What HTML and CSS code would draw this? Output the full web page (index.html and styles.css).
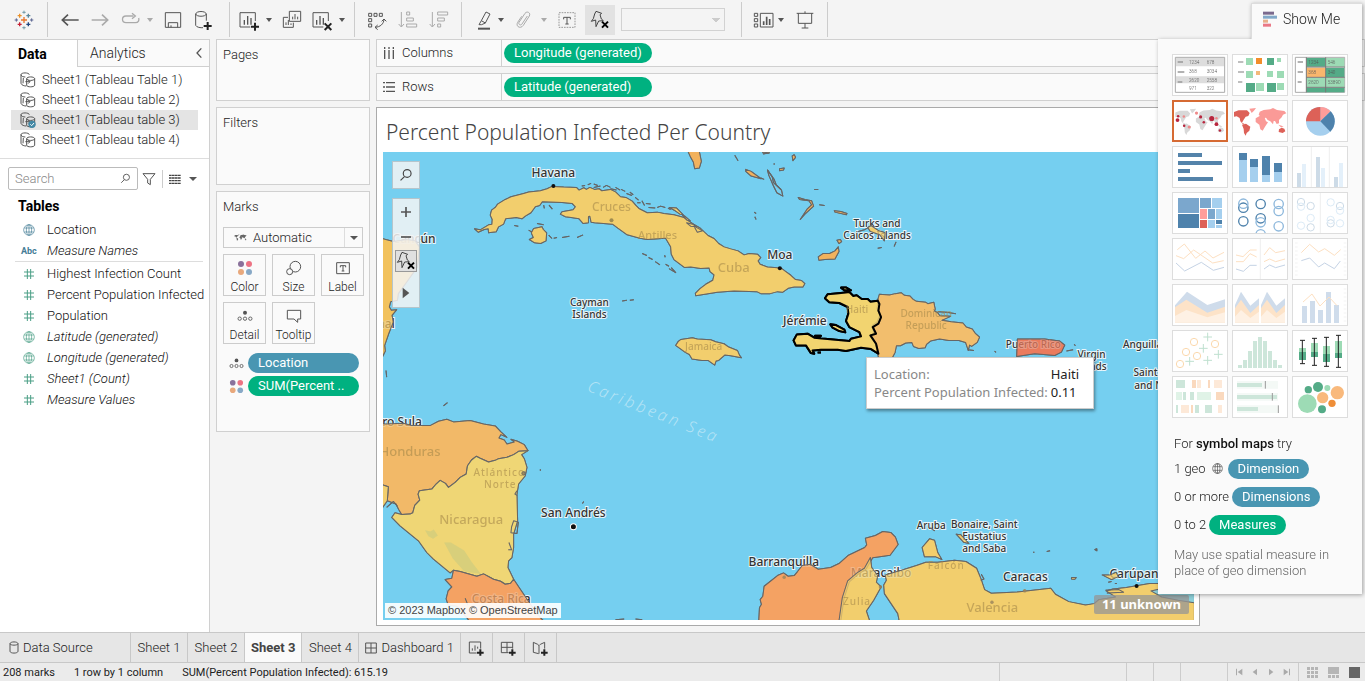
FILE: index.html
```html
<!DOCTYPE html>
<html lang="en">
<head>
<meta charset="utf-8">
<title>Percent Population Infected Per Country</title>
<link rel="stylesheet" href="styles.css">
</head>
<body>
<svg class="defs" aria-hidden="true">
  <defs>
    <symbol id="globe" viewBox="0 0 36 36"><g fill="none" stroke="currentColor" stroke-width="2"><circle cx="18" cy="18" r="16"/><ellipse cx="18" cy="18" rx="8" ry="16"/><path d="M4 12H32M4 24H32M18 3V33"/></g></symbol>
    <symbol id="hash" viewBox="0 0 36 36"><path d="M13 3V33M23 3V33M3 12H33M3 24H33" fill="none" stroke="currentColor" stroke-width="3"/></symbol>
    <symbol id="source" viewBox="0 0 48 48"><g fill="none" stroke="currentColor" stroke-width="3"><path d="M3 8v26c2 6 10 8 16 8M3 8c0-7 24-7 25 0M3 8c1 6 8 7 13 7M10 18l-1 16"/><path d="M20 20v20c1 6 22 6 24 0V20M20 20c1-7 23-7 24 0c-1 7-23 7-24 0M16 29h14M24 23l6 6-6 6"/></g></symbol>
    <symbol id="find" viewBox="0 0 36 36"><g fill="none" stroke="currentColor" stroke-width="3"><circle cx="21" cy="14" r="10"/><path d="M14 22L4 32"/></g></symbol>
    <symbol id="pinx" viewBox="0 0 60 60"><path d="M18 4l17 6-5 4 4 13 6 5-14 1-8 17-1-20-13 4 6-8 4-14z" fill="none" stroke="currentColor" stroke-width="3"/><path d="M36 35l18 18M54 35L36 53" stroke="#000" stroke-width="6"/></symbol>
    <symbol id="detail" viewBox="0 0 48 36"><circle cx="24" cy="8" r="6" fill="#555"/><g fill="none" stroke="#666" stroke-width="3"><circle cx="8" cy="26" r="5"/><circle cx="24" cy="26" r="5"/><circle cx="40" cy="26" r="5"/></g></symbol>
    <symbol id="dots" viewBox="0 0 48 48"><circle cx="12" cy="12" r="9" fill="#8a719b"/><circle cx="36" cy="12" r="9" fill="#ed7384"/><circle cx="12" cy="36" r="9" fill="#e8a87c"/><circle cx="36" cy="36" r="9" fill="#87a8c6"/></symbol>
    <symbol id="world" viewBox="231 318 168 90"><path fill="currentColor" d="M237 336l14-5 25 0 8 8-4 9-8 2-6 9-5 9 8 4-5 1-8-9-2-10-9-5-8 1zM261 374l12-3 13 9-3 12-8 7-3 8-5-8-1-12zM372 388l8-5 8 3 3 8-8 5-12-3z"/><path d="M283 326l20-2-6 8-7 7zM302 355l12-7 14 2 5 14 6 3-9 13-7 12-7-4-3-14-11-8zM311 345l3-10 12-5 20-2 8-4 12 6 22 3 6 7-10 4-4 8-8 8 0 10-7 2-5-9-4 0-2 10-8-9-8-4-5-7-8 2zM370 374l10 3 6 4-8 1z"/></symbol>
    <g id="lands">
          <g class="land" transform="translate(380 100) scale(.33333)">
            <path fill="#f2c25e" d="M6 415L40 424 80 418 105 422 118 440 112 500 80 545 55 580 52 600 32 604 28 620 34 630 50 628 36 645 40 665 26 700 14 735 16 752 8 768z"/>
            <path fill="#f2cd6e" d="M283 386L300 389 325 374 335 372 336 358 330 345 334 330 345 322 352 312 375 298 392 290 430 280 445 276 480 272 500 266 515 259 550 261 588 262 596 270 610 263 618 268 628 262 642 268 656 266 664 272 690 268 706 276 720 290 736 292 755 303 766 316 775 325 800 338 830 336 850 340 880 344 910 352 935 370 960 385 982 406 1000 415 1014 430 1030 440 1050 446 1072 452 1090 464 1105 460 1130 462 1140 472 1132 482 1138 492 1160 500 1200 503 1215 514 1230 525 1244 538 1262 541 1272 550 1266 560 1240 560 1222 564 1205 576 1190 574 1168 580 1140 580 1128 574 1060 572 1010 576 945 586 944 579 958 565 975 552 996 540 1000 524 988 514 985 503 960 505 930 500 912 502 880 478 872 462 870 440 855 414 800 418 778 414 740 404 712 384 696 372 642 368 632 366 628 348 624 350 624 368 608 370 596 356 572 352 555 350 540 342 545 335 578 329 585 320 575 310 545 307 486 305 478 316 465 320 452 338 435 348 425 356 408 352 376 356 370 372 355 380 348 395 325 398 324 386 312 388 294 396z"/>
            <path fill="#f2cd6e" d="M460 385l25-5 4 8 10 10-2 24-16 8-18-2-16-10 12-6-6-14zM885 735l8-12 8-6 34-5 15 4 40 2 15 6 25 6 14 10 26 10 6 14 6 8-32-6-18-2-18 16-8 2-4 12-20-14-18 0-30-4-8-14-12-6z"/>
            <path fill="#f2b25e" d="M922 154h34l6 30-6 20-14 2-4-20-8-14zM1095 208l16 6 30 22-30-8-16-14zM1145 154h20v5h-18z"/>
            <path class="islets" d="M445 390l10 6M470 370l20 4M505 405l10 10M520 414l10-2M545 412l22-4M590 412l18-8M402 376l12 2M785 460l14 6M804 472l12 6M824 484l14 10M852 465l2 6M855 492l10 6M865 505l20 12M725 602l14-2M748 600l12-2M490 315l2 10M506 315l10 12M604 258l10-2M622 254l10-4M640 252l12 4M640 262l20-4M668 262l10-6 12 6M690 266l18 4M705 262l14 8M722 268l12 6M738 280l16 6M748 276l10 8M764 292l10 8M770 308l10 0M784 302l8 14M796 310l14 2M804 322l20 2M830 322l10-4 14 4M862 324l8 4M872 502l14 16M1062 166l10 16M1160 210l20 28 6 16 14 14M1120 336l6 4M1122 350l4 8"/>
            <path fill="#f2cd6e" d="M866 322l22 2 20 20-10-2-14-10zM905 344l10 6 14 12-10-2zM918 368l18 4 12 8-18-2zM940 378l26 14-16 4z"/>
          </g>
          <g class="land" transform="translate(760 140) scale(.33333)">
            <path fill="#f2be6e" d="M350 478l5-16 30 2 18-4 17-3 10 8 16 2 10 10 10 6 28 3 6 4 18-4 4 20-2 6 10 6 6 8 32 2-26 12 28 4 35 4 10 12 18 6 10 14 12 10-7 16-17 12-6-4-4 16-8-24-20-6-30 0-28-4-27 6-12 10-4 10-19 2-16-6-5-12-18 2-16 8-12 0-4 20-8 15h-42l-6-40-18-25 10-6-4-25 14-10 8-20-8-20 4-30z"/>
            <path fill="#ea7b5d" d="M768 596l82 0 45 6 15 12-10 21-20 10-60-5-54 8z"/>
            <path fill="#f2b25e" d="M172 350l14-10 20 0 16-8 10-12 2 14-12 22-30 2-18 2zM228 300l10-2 4 6-8 6zM220 212l20 2 18 6-2 4-34-8zM112 172l20 6 20 4 6 16-26 24-14 16 20-30 14-14-8-12-28-4zM94 48l6-4 4 8-8 10zM56 86l14-2-2 6-12 2z"/>
            <path class="islets" d="M20 90l14 20 4 18 24 22 4 18-18-10-10-20-14-32zM5 35l18 4-16 3M40 70v4M160 148h12M175 194l16 2M350 324l12-2M405 305l-6 14M915 632l20-4M938 612l4 4M700 632l4 4M620 628l18 2M530 514l26 2 28 4M290 275l20-6 20-12M10 118l-10-4"/>
            <path fill="#f2cd6e" d="M320 262l10-6 20 14 22 8-2 24-14-18-28-10z"/>
            <path class="haiti" fill="#f2d470" d="M192 474l8-12 40-4 25-3 12 12 10-2 15 11 18 0 8 8 22-3 5 10-3 20 8 19-8 20-17 10 10 20-17 5 17 25 7 30-22-14-30-4-45 10-25-4-50 0-25 2 5 10-10-2-15-23-30 0-7-15 10-18 32-2 20 12 40 4 65 6 5-7 30-7-5-13-30-15-10-18 7-22-2-20-25-12-30-2zM208 552l17 2 25 14 3 8-18-4-20-10zM240 442l16 0 14 8-20 0zM162 586h18l-6 6zM170 636h10"/>
          </g>
          <g class="land" transform="translate(380 360) scale(.33333)">
            <path fill="#f2b968" d="M6 188L16 190 70 188 95 195 150 195 175 182 200 176 220 184 270 180 310 190 345 196 362 214 380 230 362 222 356 232 372 238 380 250 402 244 392 236 412 242 432 252 443 270 415 272 400 282 380 290 355 294 345 299 325 304 300 293 288 287 274 298 262 315 258 340 240 350 225 365 205 380 196 368 180 359 168 370 155 385 118 390 114 400 119 418 104 434 98 456 90 460 65 461 56 446 48 430 22 420 25 378 6 372z"/>
            <path fill="#f2cd6e" d="M6 372L25 378 22 420 8 440 6 440z"/>
            <path fill="#efd576" d="M443 270L424 282 432 294 440 320 435 345 415 370 410 400 412 480 400 520 400 560 395 590 385 600 383 620 400 655 391 667 375 670 361 661 340 655 310 639 290 646 240 632 220 628 210 636 160 595 140 575 115 540 60 495 35 470 45 456 65 461 90 460 98 456 104 434 119 418 114 400 118 390 155 385 168 370 180 359 196 368 205 380 225 365 240 350 258 340 262 315 274 298 288 287 300 293 325 304 345 299 355 294 380 290 400 282 415 272z"/>
            <path fill="#f4a263" d="M220 628L240 632 290 646 310 639 340 655 361 661 375 670 391 667 400 655 420 685 454 735 480 770 494 784 270 784 260 770 230 736 204 732 198 714 204 690 215 678 195 656 215 652z"/>
            <path class="lake" d="M192 545l20 0 40 24 22 34 28 36-50-8-34-38zM135 508l16 4 10-6 12 18-14 10-14-8z"/>
            <path class="islets" d="M18 30l2 20M190 136l12-10M480 326v4M606 428l4-6M400 480l14 4-4 34-18-2 2-18zM386 545l8 22-10 0M410 390l-6 10 6 4M705 776l26-2M765 774l20 2M20 440l20-18 12 14M255 712l8 20"/>
            <circle cx="430" cy="338" r="5" fill="#8f7d5a"/>
          </g>
          <g class="land" transform="translate(760 400) scale(.33333)">
            <path fill="#f4a263" d="M-6 660l2-40 6-10-4-14 8-10 4-30 40-32 18-8 14 10 18-2 10-12 14-18 24-4 24 15 37-5 25-12 27-24 50-24 6-8-4-20 30-8 22-12 24 3 14 14 8 22-24 32-52 8-20 34-22 14-28 24-16 50-10 70z"/>
            <path fill="#f2cd6e" d="M328 470l4 30 18 24-4 20 14 14-22 40-22 32 10 30h-92l10-70 16-50 28-24 22-14zM372 522l56-16 38-12 28-10 36 0 50-6 34 4 32 20 14 34 10 30 20 11 78-4 100-11 14 18 40 22 50 10 26-4 14-12 50-8-28-18 20-6 40-4 70-12 60 0 74 20v100H416l-6-30-40-60-2-26 8-14zM483 440l22-26 15 4 10 38 12 20-18-8-34 0zM1022 522l24 0 18-8 6 14-20 8zM930 530l14 0-4 5-10-1zM585 400l14 2 24 26-16-4z"/>
            <path fill="#75cff0" d="M1168 570l36-8 30 10 66-6v40l-50-8-50-10z"/>
            <path class="islets" d="M815 454h4M856 452l10-2M1000 446l6-2v6zM1040 544l10-2M1060 548h6M1032 568l40-2 14 8-50 2M505 380l16 10M660 520l8 14-10 4"/>
            <g fill="#9a845c" stroke="none"><circle cx="70" cy="529" r="5"/><circle cx="790" cy="570" r="5"/><circle cx="692" cy="604" r="5"/><circle cx="358" cy="558" r="5"/></g>
          </g>
    </g>
  </defs>
</svg>

<header class="toolbar">
  <div class="logo"><svg viewBox="0 0 60 60" width="20" height="20" fill="none" stroke-width="4"><path stroke="#e8762d" d="M30 21v18M21 30h18"/><path stroke="#eb9129" d="M17 11v12M11 17h12"/><path stroke="#59879b" d="M43 11v12M37 17h12"/><path stroke="#c72035" d="M17 37v12M11 43h12"/><path stroke="#1f457e" d="M43 37v12M37 43h12"/><path stroke="#7199a6" stroke-width="3" d="M30 2v9M25 7h10M30 49v9M25 53h10"/><path stroke="#5b6591" stroke-width="3" d="M7 25v10M2 30h10M53 25v10M48 30h10"/></svg></div>
  <div class="group first">
    <button class="tool" aria-label="Back"><svg viewBox="0 0 72 72"><path stroke-width="5" d="M62 36H14M30 20L13 36l17 16"/></svg></button>
    <button class="tool dim" aria-label="Forward"><svg viewBox="0 0 72 72"><path stroke-width="5" d="M11 36H59M42 20l17 16-17 16"/></svg></button>
    <div class="split dim"><button class="tool dim" aria-label="Replay"><svg viewBox="0 0 72 72"><path stroke-width="4" d="M46 24h-22c-14 0-14 20 0 20h28c10 0 12-8 10-14M42 16l10 8-10 8"/></svg></button><button class="caret" aria-label="Replay options"></button></div>
    <button class="tool" aria-label="Save"><svg viewBox="0 0 72 72"><path d="M13 14h46v44H13zM22 58V44h28v14M30 58v-6"/></svg></button>
    <button class="tool" aria-label="New data source"><svg viewBox="0 0 72 72"><path d="M14 18v34c2 6 16 8 22 7M14 18c2-10 30-10 32 0c-2 9-30 9-32 0M46 18v20"/><path class="plus" d="M50 42v24M38 54h24"/></svg></button>
  </div>
  <div class="group tight">
    <div class="split"><button class="tool" aria-label="New worksheet"><svg viewBox="0 0 72 72"><path d="M40 57H9V14h46v25"/><path stroke-width="4" d="M22 50V36M32 50V24M42 50V30"/><path class="plus" d="M54 44v24M42 56h24"/></svg></button><button class="caret" aria-label="Worksheet options"></button></div>
    <button class="tool" aria-label="Duplicate"><svg viewBox="0 0 72 72"><path d="M28 10h34v30H28zM24 28H10v30h30V44M38 34v-8M45 34V18M53 34v-8M18 51v-8M25 51V36M33 51v-5"/></svg></button>
    <div class="split"><button class="tool" aria-label="Clear sheet"><svg viewBox="0 0 72 72"><path d="M40 57H9V14h46v25"/><path stroke-width="4" d="M20 50V36M30 50V24M40 50V30"/><path class="plus" d="M44 46l20 20M64 46L44 66"/></svg></button><button class="caret" aria-label="Clear options"></button></div>
  </div>
  <div class="group">
    <button class="tool" aria-label="Swap rows and columns"><svg viewBox="0 0 72 72"><path d="M11 16h9v9h-9zM27 16h9v9h-9zM43 16h9v9h-9zM11 32h9v9h-9zM11 48h9v9h-9zM30 58c16-1 26-10 27-24M38 51l-8 7 8 7M50 40l7-7 7 7"/></svg></button>
    <button class="tool dim" aria-label="Sort ascending"><svg viewBox="0 0 72 72"><path d="M16 12v44M8 48l8 9 8-9M32 12h9v9h-9zM32 30h20v9H32zM32 48h30v9H32z"/></svg></button>
    <button class="tool dim" aria-label="Sort descending"><svg viewBox="0 0 72 72"><path d="M16 12v44M8 48l8 9 8-9M32 12h30v9H32zM32 30h20v9H32zM32 48h9v9h-9z"/></svg></button>
  </div>
  <div class="group close">
    <div class="split snug"><button class="tool" aria-label="Highlight"><svg viewBox="0 0 72 72"><path d="M28 38L42 12l12 6-14 27-11 5-8 0zM28 38l12 7"/><path stroke-width="6" d="M18 62h36"/></svg></button><button class="caret" aria-label="Highlight options"></button></div>
    <div class="split dim"><button class="tool dim" aria-label="Group"><svg viewBox="0 0 72 72"><path d="M46 24L30 48c-4 6-12 1-9-5l18-27c6-8 18-2 13 8L34 52c-8 12-24 4-17-9l12-18"/></svg></button><button class="caret" aria-label="Group options"></button></div>
    <button class="tool" aria-label="Show mark labels"><svg viewBox="0 0 72 72"><path stroke-dasharray="5 3" stroke="#999" d="M12 14h48v44H12z"/><path d="M26 34v-6h20v6M36 28v20M31 48h10"/></svg></button>
    <button class="tool active" aria-label="Fix axes"><svg viewBox="0 0 60 60"><use href="#pinx"/></svg></button>
    <select class="fit" aria-label="Fit"><option></option></select>
  </div>
  <div class="group">
    <div class="split snug"><button class="tool" aria-label="Show cards"><svg viewBox="0 0 72 72"><path d="M7 16h10v9H7zM7 32h10v9H7zM7 48h10v9H7zM25 16h38v41H25z"/><path stroke-width="5" d="M35 51V40M44 51V26M53 51V33"/></svg></button><button class="caret" aria-label="Card options"></button></div>
    <button class="tool" aria-label="Presentation mode"><svg viewBox="0 0 72 72"><path d="M11 16h50M16 16v30h40V16M36 46v14M26 60h20M36 16v-6"/></svg></button>
  </div>
</header>

<main class="workspace">
  <aside class="data-pane">
    <div class="pane-tabs">
      <button class="pane-tab current">Data</button>
      <button class="pane-tab other"><span>Analytics</span><svg viewBox="0 0 24 36" width="8" height="12"><path d="M19 4L6 18l13 14" fill="none" stroke="#555" stroke-width="4"/></svg></button>
    </div>
    <ul class="sources">
      <li><svg><use href="#source"/></svg>Sheet1 (Tableau Table 1)</li>
      <li><svg><use href="#source"/></svg>Sheet1 (Tableau table 2)</li>
      <li class="selected"><svg viewBox="0 0 48 48"><use href="#source"/><circle cx="36" cy="37" r="11" fill="#4389a6"/><path d="M31 37l4 4 7-8" fill="none" stroke="#fff" stroke-width="3"/></svg>Sheet1 (Tableau table 3)</li>
      <li><svg><use href="#source"/></svg>Sheet1 (Tableau table 4)</li>
    </ul>
    <div class="search-row">
      <label class="search"><input type="text" placeholder="Search" aria-label="Search"><svg><use href="#find"/></svg></label>
      <button class="mini" aria-label="Filter fields"><svg viewBox="0 0 42 42" width="14" height="14"><path d="M3 5h36L25 22v16l-8-5V22z" fill="none" stroke="#555" stroke-width="3"/></svg></button>
      <button class="mini list" aria-label="View options"><svg viewBox="0 0 36 30" width="12" height="10"><path d="M0 4h36M0 12h36M0 20h36M0 28h36" stroke="#444" stroke-width="4" stroke-dasharray="8 1"/></svg><span class="tri"></span></button>
    </div>
    <h2>Tables</h2>
    <ul class="fields">
      <li class="dim-f"><svg><use href="#globe"/></svg>Location</li>
      <li class="dim-f"><b class="abc">Abc</b><i>Measure Names</i></li>
    </ul>
    <ul class="fields measures">
      <li><svg><use href="#hash"/></svg>Highest Infection Count</li>
      <li><svg><use href="#hash"/></svg>Percent Population Infected</li>
      <li><svg><use href="#hash"/></svg>Population</li>
      <li><svg><use href="#globe"/></svg><i>Latitude (generated)</i></li>
      <li><svg><use href="#globe"/></svg><i>Longitude (generated)</i></li>
      <li><svg><use href="#hash"/></svg><i>Sheet1 (Count)</i></li>
      <li><svg><use href="#hash"/></svg><i>Measure Values</i></li>
    </ul>
  </aside>

  <section class="cards">
    <div class="card pages">Pages</div>
    <div class="card filters">Filters</div>
    <div class="card marks">
      <div>Marks</div>
      <div class="mark-type"><svg width="13" height="9"><use href="#world"/></svg><select aria-label="Mark type"><option>Automatic</option></select><span class="drop"></span></div>
      <div class="mark-grid">
        <button><svg width="16" height="16"><use href="#dots"/></svg>Color</button>
        <button><svg viewBox="0 0 48 48" width="16" height="16" fill="none" stroke="#555" stroke-width="3"><circle cx="28" cy="20" r="16"/><circle cx="11" cy="35" r="9" fill="#fafafa"/></svg>Size</button>
        <button><svg viewBox="0 0 48 48" width="16" height="16" fill="none" stroke="#555" stroke-width="3"><path d="M5 8h38v33H5zM16 22v-5h16v5M24 17v16M20 33h8"/></svg>Label</button>
        <button><svg viewBox="0 0 48 36" width="16" height="16"><use href="#detail"/></svg>Detail</button>
        <button><svg viewBox="0 0 48 48" width="16" height="16" fill="none" stroke="#555" stroke-width="3"><path d="M4 7h40v26H35v10l-11-10H4z"/></svg>Tooltip</button>
      </div>
      <div class="encoding"><svg viewBox="0 0 48 36"><use href="#detail"/></svg><span class="pill blue">Location</span></div>
      <div class="encoding"><svg><use href="#dots"/></svg><span class="pill green">SUM(Percent ..</span></div>
    </div>
  </section>

  <section class="sheet">
    <div class="shelf"><div class="shelf-name"><svg viewBox="0 0 36 36" width="12" height="12"><path d="M5 0v6M18 0v6M31 0v6M5 9v27M18 9v27M31 9v27" stroke="#555" stroke-width="4"/></svg>Columns</div><span class="pill green">Longitude (generated)</span></div>
    <div class="shelf"><div class="shelf-name"><svg viewBox="0 0 36 36" width="12" height="12"><path d="M0 5h6M0 18h6M0 31h6M9 5h27M9 18h27M9 31h27" stroke="#555" stroke-width="4"/></svg>Rows</div><span class="pill green">Latitude (generated)</span></div>
    <div class="view">
      <h1>Percent Population Infected Per Country</h1>
      <div class="map">
        <svg class="geo" viewBox="383 152 810 467" preserveAspectRatio="xMinYMin slice" role="img" aria-label="Map of the Caribbean">
          <use href="#lands" class="base"/>
          <g class="city">
            <text x="553" y="177">Havana</text><text x="779" y="259">Moa</text><text x="414" y="243">Cancún</text><text x="804" y="325">Jérémie</text>
            <text x="386" y="328">nal</text><text x="402" y="425">ro Sula</text><text x="573" y="516">San Andrés</text><text x="783" y="565">Barranquilla</text>
            <text x="880" y="576">Maracaibo</text><text x="1024" y="580">Caracas</text><text x="1136" y="577">Carúpano</text><text x="501" y="602">Costa Rica</text>
          </g>
          <g class="isle">
            <text x="589" y="306">Cayman</text><text x="589" y="318">Islands</text><text x="876" y="227">Turks and</text><text x="876" y="239">Caicos Islands</text>
            <text x="1032" y="348">Puerto Rico</text><text x="1090" y="358">Virgin</text><text x="1088" y="370">Islands</text><text x="1141" y="348">Anguilla</text><text x="1144" y="376">Saint</text><text x="1147" y="388">and N</text>
            <text x="930" y="528">Aruba</text><text x="983" y="527">Bonaire, Saint</text><text x="983" y="539">Eustatius</text><text x="983" y="551">and Saba</text>
          </g>
          <use href="#lands" class="tint"/>
          <g class="faded">
            <text x="611" y="211" font-size="12">Cruces</text><text x="657" y="239" font-size="11">Antilles</text><text x="733" y="272" font-size="13">Cuba</text><text x="703" y="350" font-size="10">Jamaica</text>
            <text x="856" y="313" font-size="10">Haiti</text><text x="925" y="317" font-size="10">Dominican</text><text x="925" y="329" font-size="10">Republic</text><text x="410" y="455" font-size="13">Honduras</text>
            <text x="471" y="523" font-size="13">Nicaragua</text><text x="499" y="475" font-size="10" class="wide">Atlántico</text><text x="500" y="487" font-size="10" class="wide">Norte</text>
            <text x="991" y="611" font-size="13">Valencia</text><text x="945" y="568" font-size="10" class="wide">Falcón</text><text x="856" y="604" font-size="10" class="wide">Zulia</text>
          </g>
          <text class="sea" transform="translate(586 390) rotate(22)">Caribbean Sea</text>
          <g fill="#111"><circle cx="553" cy="186" r="2"/><circle cx="779" cy="268" r="2"/><circle cx="573" cy="526" r="3" stroke="#fff"/><circle cx="1135" cy="585" r="2"/><circle cx="611" cy="220" r="2" fill="#a08c50"/></g>
        </svg>
        <button class="map-search" aria-label="Search map"><svg width="14" height="14"><use href="#find"/></svg></button>
        <div class="map-tools">
          <button aria-label="Zoom in"><svg viewBox="0 0 36 36" width="12" height="12"><path d="M18 3v30M3 18h30" stroke="#555" stroke-width="5"/></svg></button>
          <button aria-label="Zoom out"><svg viewBox="0 0 36 36" width="12" height="12"><path d="M3 18h30" stroke="#555" stroke-width="5"/></svg></button>
          <button class="pinned" aria-label="Reset map"><svg width="20" height="20"><use href="#pinx"/></svg></button>
          <button aria-label="More tools"><svg viewBox="0 0 24 36" width="8" height="12"><path d="M2 2l20 16L2 34z" fill="#555"/></svg></button>
        </div>
        <div class="credit">© 2023 Mapbox © OpenStreetMap</div>
        <button class="unknown">11 unknown</button>
        <dl class="tip"><dt>Location:</dt><dd>Haiti</dd><dt>Percent Population Infected:</dt><dd>0.11</dd></dl>
      </div>
    </div>
  </section>
</main>

<aside class="showme">
  <h2 class="showme-tab"><svg viewBox="0 0 45 48" width="15" height="16"><path fill="#7b6a8e" d="M0 2h33v9H0z"/><path fill="#82a9c9" d="M0 14h42v9H0z"/><path fill="#e8b08a" d="M0 26h15v9H0z"/><path fill="#ea7886" d="M0 38h24v9H0z"/></svg>Show Me</h2>
  <div class="showme-body">
    <div class="thumbs">
      <button aria-label="Text table"><svg viewBox="54 165 162 120"><path d="M61 172h148v105H61z" fill="#fff" stroke="#aaa" stroke-width="3"/><path fill="#ddd" d="M63 174h144v25H63zM63 229h144v21H63z"/><path stroke="#999" stroke-width="4" d="M68 186h16M68 216h20M68 246h14"/><g class="num"><text x="102" y="193">1234</text><text x="155" y="193">678</text><text x="102" y="220">368</text><text x="155" y="220">3034</text><text x="102" y="247">2620</text><text x="155" y="247">2558</text><text x="102" y="271">971</text><text x="155" y="271">322</text></g></svg></button>
      <button aria-label="Heat map"><svg viewBox="234 165 162 120"><path stroke="#aaa" stroke-width="4" d="M249 186h16M249 216h18M249 246h13"/><path fill="#9ddbb5" d="M273 174h21v21h-21zM366 174h12v12h-12zM273 213h21v21h-21zM336 213h18v18h-18zM366 213h21v21h-21zM303 249h24v24h-24zM366 249h21v21h-21z"/><path fill="#54ab87" d="M336 174h21v21h-21zM273 249h27v27h-27zM336 249h27v27h-27z"/><path fill="#f28e2b" d="M303 174h18v18h-18z"/><path fill="#f3b97a" d="M303 213h12v12h-12z"/></svg></button>
      <button aria-label="Highlight table"><svg viewBox="414 165 162 120"><path d="M421 172h148v105H421z" fill="#fff" stroke="#aaa" stroke-width="3"/><path fill="#54ab87" d="M454 174h58v26h-58zM512 203h56v28h-56zM454 263h114v14H454z"/><path fill="#9ddbb5" d="M512 174h56v26h-56zM454 233h114v28H454z"/><path fill="#f9b66d" d="M454 203h58v28h-58z"/><path stroke="#777" stroke-width="3" d="M454 172v105M512 172v105M454 201h115M454 232h115M454 262h115"/><path stroke="#999" stroke-width="4" d="M428 186h16M428 216h16M428 246h12"/><g class="num"><text x="460" y="192">1234</text><text x="518" y="192">546</text><text x="460" y="222">368</text><text x="518" y="222">340</text><text x="460" y="252">2620</text><text x="518" y="252">53890</text></g></svg></button>
      <button class="picked" aria-label="Symbol maps"><svg viewBox="54 303 162 120"><use href="#world" class="grey" x="51" y="318" width="168" height="90"/><g fill="#b8263e"><circle cx="64" cy="360" r="6"/><circle cx="66" cy="348" r="4"/><circle cx="85" cy="378" r="4"/><circle cx="137" cy="350" r="5"/><circle cx="172" cy="355" r="8"/><circle cx="187" cy="373" r="6"/><circle cx="198" cy="393" r="4"/><circle cx="147" cy="367" r="4"/></g><g fill="#ef8a8a"><circle cx="84" cy="349" r="4"/><circle cx="101" cy="382" r="5"/><circle cx="124" cy="338" r="5"/><circle cx="187" cy="354" r="4"/></g></svg></button>
      <button aria-label="Maps"><svg viewBox="234 303 162 120"><use href="#world" class="red" x="231" y="318" width="168" height="90"/></svg></button>
      <button aria-label="Pie chart"><svg viewBox="414 303 162 120"><circle cx="496" cy="364" r="43" fill="#a5cfee"/><path fill="#ff9d9a" d="M496 364V321a43 43 0 0 1 31 13z"/><path fill="#4e82ac" d="M496 364l31-30a43 43 0 0 1-1 61z"/><path fill="#dd6158" d="M496 364h-43a43 43 0 0 1 43-43z"/></svg></button>
      <button aria-label="Horizontal bars"><svg viewBox="54 441 162 120"><path fill="#5483aa" d="M69 459h72v12H69zM69 483h132v12H69zM69 507h36v12H69zM69 531h105v12H69z"/></svg></button>
      <button aria-label="Stacked bars"><svg viewBox="234 441 162 120"><path fill="#a5cfee" d="M252 480h24v66h-24zM285 501h24v45h-24zM321 525h24v21h-24zM357 516h24v30h-24z"/><path fill="#4e82ac" d="M252 459h24v21h-24zM285 477h24v24h-24zM321 468h24v57h-24zM357 489h24v27h-24z"/></svg></button>
      <button aria-label="Side-by-side bars"><svg viewBox="414 441 162 120"><path fill="#cddbe7" d="M426 519h12v42h-12zM483 471h12v90h-12zM537 531h12v30h-12z"/><path fill="#e4f0fa" d="M441 492h12v69h-12zM498 504h12v57h-12zM552 489h12v72h-12z"/><path stroke="#eee" stroke-width="3" d="M469 441v120M523 441v120"/></svg></button>
      <button aria-label="Treemap"><svg viewBox="54 579 162 120"><path fill="#7ba7cd" d="M69 594h63v45H69zM135 594h33v30h-33zM159 627h21v30h-21z"/><path fill="#4e82ac" d="M69 642h63v42H69zM183 660h18v12h-18z"/><path fill="#a5cfee" d="M171 594h30v30h-30zM183 627h18v30h-18zM159 660h21v24h-21zM183 675h18v9h-18z"/><path fill="#ff9d9a" d="M135 627h21v30h-21z"/><path fill="#dd6158" d="M135 660h21v24h-21z"/></svg></button>
      <button aria-label="Circle views"><svg viewBox="234 579 162 120" fill="none" stroke-width="4"><g stroke="#4e82ac"><circle cx="265" cy="623" r="14"/><circle cx="265" cy="664" r="14"/><circle cx="317" cy="612" r="14"/><circle cx="317" cy="655" r="14"/></g><g stroke="#8eb8dc"><circle cx="265" cy="611" r="14"/><circle cx="317" cy="667" r="14"/><circle cx="317" cy="703" r="14"/><circle cx="371" cy="612" r="14"/><circle cx="371" cy="633" r="14"/><circle cx="371" cy="679" r="14"/></g></svg></button>
      <button aria-label="Side-by-side circles"><svg viewBox="414 579 162 120" fill="none" stroke-width="3"><path stroke="#eee" d="M496 579v120"/><g stroke="#cddbe7"><circle cx="438" cy="606" r="11"/><circle cx="467" cy="618" r="11"/><circle cx="467" cy="682" r="11"/><circle cx="555" cy="618" r="11"/><circle cx="527" cy="670" r="11"/></g><g stroke="#dcebf7"><circle cx="438" cy="620" r="11"/><circle cx="467" cy="654" r="11"/><circle cx="438" cy="677" r="11"/><circle cx="527" cy="607" r="11"/><circle cx="555" cy="632" r="11"/><circle cx="527" cy="660" r="11"/><circle cx="555" cy="670" r="11"/></g></svg></button>
      <button aria-label="Continuous lines"><svg class="lines" viewBox="54 27 162 120"><path class="o" d="M67 59l21-17 34 43 28-22 24 21 33-17M63 77l23 9 30-26 22 15 35 24 33-7"/><path class="b" d="M63 99l26 24 50-26 36 24 32-9"/></svg></button>
      <button aria-label="Discrete lines"><svg class="lines" viewBox="234 27 162 120"><path class="o" d="M243 75l21 5 21-20h20M243 95l22 0 20-24 20 10M327 75l17-22 18 15 28-6M327 95l17-8 18 8 28-8"/><path class="b" d="M243 117l22 7 20-18h20M327 117l17-12 18 8 28-8"/><path stroke="#eee" d="M316 27v120"/></svg></button>
      <button aria-label="Dual lines"><svg class="lines" viewBox="414 27 162 120"><path class="o" d="M439 68l25-25 27 23 18-10 29 20 19-17"/><path class="b" d="M439 92l25-8 27 27 18-12 29 17 18-23"/><path stroke="#e6e6e6" stroke-dasharray="2 10" stroke-width="8" d="M424 38v100M570 38v100"/></svg></button>
      <button aria-label="Area charts"><svg viewBox="54 165 162 120"><path fill="#cfdceb" d="M60 226l36-41 61 40 53-17v70H60z"/><path fill="#fde3c8" d="M60 232l34-23 63 39 53-18v48H60z"/><path fill="#fef1e4" d="M60 258l34-18 63 22 53-15v31H60z"/></svg></button>
      <button aria-label="Discrete area charts"><svg viewBox="234 165 162 120"><path fill="#cfdceb" d="M240 225l18-40 28 42 26-22v73h-72zM318 225l18-40 28 42 26-22v73h-72z"/><path fill="#fde3c8" d="M240 235l18-26 28 40 26-24v53h-72zM318 235l18-26 28 40 26-24v53h-72z"/><path fill="#fef1e4" d="M240 260l18-20 28 24 26-19v33h-72zM318 260l18-20 28 24 26-19v33h-72z"/></svg></button>
      <button aria-label="Dual combination"><svg class="lines" viewBox="414 165 162 120"><path fill="#cfdceb" d="M441 228h15v51h-15zM465 213h15v66h-15zM489 240h15v39h-15zM513 186h15v93h-15zM537 225h15v54h-15z"/><path class="o" d="M444 216l27-24 24 36 27-27 24 26"/><path stroke="#e6e6e6" stroke-dasharray="2 10" stroke-width="8" d="M570 176v100"/></svg></button>
      <button aria-label="Scatter plots"><svg viewBox="54 303 162 120" fill="none" stroke-width="3"><g stroke="#fbd9ae"><circle cx="117" cy="336" r="11"/><circle cx="180" cy="342" r="11"/><circle cx="93" cy="366" r="11"/><circle cx="126" cy="378" r="11"/><circle cx="75" cy="402" r="11"/></g><path stroke="#bfe0cf" d="M145 321h26M158 308v26M132 355h26M145 342v26M91 394h26M104 381v26M145 391h26M158 378v26M177 373h26M190 360v26"/></svg></button>
      <button aria-label="Histogram"><svg viewBox="234 303 162 120"><path fill="#cde6da" d="M249 405h12v9h-12zM264 390h12v24h-12zM279 363h12v51h-12zM294 333h12v81h-12zM309 321h12v93h-12zM324 333h12v81h-12zM339 363h12v51h-12zM354 390h12v24h-12zM369 405h12v9h-12z"/></svg></button>
      <button aria-label="Box-and-whisker plots"><svg viewBox="414 303 162 120"><path fill="#9ddbb5" d="M432 354h21v12h-21zM468 339h21v27h-21zM504 348h21v24h-21zM540 333h21v36h-21z"/><path fill="#54ab87" d="M432 366h21v24h-21zM468 366h21v15h-21zM504 372h21v24h-21zM540 369h21v15h-21z"/><path fill="none" stroke="#222" stroke-width="3" d="M435 331h15M442 331v70M435 401h15M471 325h15M478 325v81M471 406h15M507 322h15M514 322v87M507 409h15M543 316h15M550 316v96M543 412h15"/></svg></button>
      <button aria-label="Gantt"><svg viewBox="54 441 162 120"><path fill="#cde6da" d="M63 450h27v24H63zM84 486h9v24h-9zM105 486h12v24h-12zM63 525h6v24h-6zM120 525h12v24h-12zM150 525h21v24h-21z"/><path fill="#fad9be" d="M111 450h12v24h-12zM159 450h6v24h-6zM183 486h24v24h-24zM108 525h6v24h-6z"/><path fill="#fde9d8" d="M126 450h12v24h-12zM177 450h24v24h-24zM78 525h24v24H78zM189 525h12v24h-12z"/><path fill="#e0f3e7" d="M63 486h18v24H63zM126 486h42v24h-42z"/></svg></button>
      <button aria-label="Bullet graphs"><svg viewBox="234 441 162 120"><path fill="#f4f9f6" d="M246 453h123v23H246zM246 489h123v23H246zM246 526h123v23H246z"/><path fill="#cde6da" d="M246 459h75v12h-75zM246 495h120v12H246zM246 531h63v12h-63z"/><path stroke="#999" stroke-width="3" d="M331 453v23M352 489v23M370 526v23"/></svg></button>
      <button aria-label="Packed bubbles"><svg viewBox="414 441 162 120"><g fill="#54ab87"><circle cx="460" cy="479" r="11"/><circle cx="489" cy="471" r="15"/><circle cx="501" cy="538" r="12"/></g><g fill="#9ddbb5"><circle cx="457" cy="521" r="28"/><circle cx="517" cy="474" r="9"/></g><g fill="#f9b97c"><circle cx="503" cy="503" r="17"/><circle cx="547" cy="488" r="20"/></g><circle cx="531" cy="520" r="11" fill="#ef8e38"/></svg></button>
    </div>
    <p class="hint">For <b>symbol maps</b> try</p>
    <p class="need">1 geo <svg width="11" height="11"><use href="#globe"/></svg> <span class="pill blue">Dimension</span></p>
    <p class="need">0 or more <span class="pill blue">Dimensions</span></p>
    <p class="need">0 to 2 <span class="pill green">Measures</span></p>
    <p class="note">May use spatial measure in place of geo dimension</p>
  </div>
</aside>

<nav class="sheets">
  <button class="source-tab"><svg viewBox="0 0 30 39" width="10" height="13"><path d="M3 8v23c1 7 23 7 24 0V8M3 8c1-7 23-7 24 0c-1 6-23 6-24 0" fill="none" stroke="#555" stroke-width="3"/></svg>Data Source</button>
  <button>Sheet 1</button><button>Sheet 2</button><button class="on">Sheet 3</button><button>Sheet 4</button>
  <button><svg viewBox="0 0 36 36" width="12" height="12"><path d="M2 3h32v30H2zM18 3v30M2 18h32" fill="none" stroke="#555" stroke-width="3"/></svg>Dashboard 1</button>
  <button class="add" aria-label="New worksheet"><svg viewBox="0 0 48 48"><path d="M26 39H4V6h34v20M13 32v-7M21 32V16M29 26v-6"/><path class="plus" d="M37 28v19M27 38h20"/></svg></button>
  <button class="add" aria-label="New dashboard"><svg viewBox="0 0 48 48"><path d="M26 38H4V7h34v19M21 7v31M4 22h34"/><path class="plus" d="M37 28v19M27 38h20"/></svg></button>
  <button class="add" aria-label="New story"><svg viewBox="0 0 48 48"><path d="M4 7l13 6 4 4 4-4 13-6v19M4 7v30l16 4M21 17v24"/><path class="plus" d="M37 28v19M27 38h20"/></svg></button>
</nav>
<footer class="status">
  <span>208 marks</span><span>1 row by 1 column</span><span>SUM(Percent Population Infected): 615.19</span>
  <div class="slots"><i class="s1"></i><i class="s2"></i><i class="s2"></i><i class="s3"></i>
    <div class="nav"><button aria-label="First"><svg viewBox="0 0 24 24"><path d="M3 2v20h3V2zM22 2L8 12l14 10z"/></svg></button><button aria-label="Previous"><svg viewBox="0 0 24 24"><path d="M18 2L5 12l13 10z"/></svg></button><button aria-label="Next"><svg viewBox="0 0 24 24"><path d="M6 2l13 10L6 22z"/></svg></button><button aria-label="Last"><svg viewBox="0 0 24 24"><path d="M18 2v20h3V2zM2 2l14 10L2 22z"/></svg></button></div>
    <div class="modes"><button aria-label="Sheet sorter"><svg viewBox="0 0 33 33"><path d="M0 0h9v9H0zM12 0h9v9h-9zM24 0h9v9h-9zM0 12h9v9H0zM12 12h9v9h-9zM24 12h9v9h-9zM0 24h9v9H0zM12 24h9v9h-9zM24 24h9v9h-9z"/></svg></button><button aria-label="Filmstrip"><svg viewBox="0 0 33 33"><path d="M0 0h33v21H0zM0 24h9v9H0zM12 24h9v9h-9zM24 24h9v9h-9z"/></svg></button><button class="full" aria-label="Tabs"><svg viewBox="0 0 33 33"><path d="M0 0h33v33H0z"/></svg></button></div>
  </div>
</footer>
</body>
</html>
```
FILE: styles.css
```css
* { box-sizing: border-box; }
body { margin: 0; min-height: 100vh; display: flex; flex-direction: column; position: relative; background: #f4f4f4; color: #222; font: 300 13px/20px Roboto, "Liberation Sans", sans-serif; overflow: hidden; }
button, input, select { font: inherit; color: inherit; margin: 0; padding: 0; border: 0; background: none; }
h1, h2, p, ul, dl, dd { margin: 0; padding: 0; }
ul { list-style: none; }
svg { flex: none; }
.defs { position: absolute; width: 0; height: 0; }

.toolbar { display: flex; height: 39px; padding: 2px 0; align-items: stretch; }
.logo { width: 48px; border-right: 1px solid #ccc; display: flex; align-items: center; justify-content: center; }
.group { display: flex; align-items: center; gap: 7px; padding: 0 10px; border-right: 1px solid #ccc; }
.first { gap: 6px; padding-right: 14px; }
.tight { padding: 0 7px; gap: 6px; }
.close { gap: 6px; padding-right: 16px; }
.tool { width: 24px; height: 30px; display: grid; place-items: center; }
.tool svg { width: 24px; height: 24px; fill: none; stroke: #555; stroke-width: 3; color: #444; }
.tool .plus, .add .plus { stroke: #222; stroke-width: 6; }
.tool.dim svg { stroke: #aaa; }
.tool.active { width: 30px; background: #e2e2e2; }
.tool.active svg { width: 20px; height: 20px; }
.split { display: flex; align-items: center; gap: 3px; }
.snug { gap: 0; }
.caret { width: 10px; height: 20px; display: grid; place-items: center; }
.caret::before { content: ""; border: 3px solid transparent; border-top: 4px solid #555; border-bottom: 0; }
.dim .caret::before { border-top-color: #aaa; }
.fit { appearance: none; width: 104px; height: 23px; border: 1px solid #d2d2d2; background: linear-gradient(45deg, transparent 50%, #ccc 50%) 90px 9px / 4px 4px no-repeat, linear-gradient(-45deg, transparent 50%, #ccc 50%) 94px 9px / 4px 4px no-repeat; }

.workspace { flex: 1; display: flex; min-height: 0; }
.data-pane { width: 210px; background: #fff; border-right: 1px solid #d0d0d0; border-top: 1px solid #d0d0d0; flex: none; }
.pane-tabs { display: flex; height: 27px; font-size: 14px; }
.pane-tab { text-align: left; }
.current { width: 77px; padding-left: 18px; font-weight: 700; color: #000; }
.other { flex: 1; display: flex; align-items: center; justify-content: space-between; padding: 0 6px 0 12px; background: #fafafa; border-left: 1px solid #d0d0d0; border-bottom: 1px solid #d0d0d0; }
.sources { padding: 3px 11px 8px; border-bottom: 1px solid #ddd; }
.sources li { display: flex; align-items: center; gap: 6px; height: 20px; padding-left: 9px; }
.sources svg { width: 16px; height: 16px; color: #555; }
.sources .selected { background: #e4e4e4; }
.search-row { display: flex; align-items: center; gap: 4px; padding: 8px 8px 6px; }
.search { display: flex; align-items: center; width: 130px; height: 23px; padding: 0 6px; border: 1px solid #bbb; border-radius: 2px; }
.search input { flex: 1; min-width: 0; }
.search input::placeholder { color: #888; }
.search svg { width: 11px; height: 11px; color: #555; }
.mini { display: flex; align-items: center; }
.list { height: 18px; margin-left: 2px; padding-left: 6px; gap: 8px; border-left: 1px solid #ccc; }
.tri, .drop::before { border: 4px solid transparent; border-top: 4px solid #555; border-bottom: 0; }
.data-pane h2 { font-size: 14px; line-height: 20px; font-weight: 700; padding-left: 18px; color: #000; margin-bottom: 3px; }
.fields { margin: 0 6px 0 15px; padding-left: 6px; white-space: nowrap; color: #111; }
.fields li { display: flex; align-items: center; height: 21px; gap: 11px; }
.fields svg { width: 12px; height: 12px; margin: 0 1px 0 2px; color: #4a9e85; }
.fields .dim-f svg, .abc { color: #447d96; }
.abc { width: 17px; font-size: 9px; font-weight: 700; margin-right: -2px; }
.measures { border-top: 1px solid #ddd; padding-top: 1px; }

.cards { width: 154px; margin-left: 6px; flex: none; display: flex; flex-direction: column; gap: 6px; }
.card { border: 1px solid #d0d0d0; background: #fafafa; padding: 5px 6px; }
.pages { height: 62px; }
.filters { height: 78px; }
.marks { height: 241px; }
.mark-type { display: flex; align-items: center; height: 21px; margin-top: 10px; border: 1px solid #ccc; padding-left: 10px; gap: 6px; }
.mark-type select { appearance: none; flex: 1; min-width: 0; line-height: 18px; }
.mark-type svg { fill: #666; color: #666; }
.drop { align-self: stretch; width: 18px; border-left: 1px solid #ddd; display: grid; place-items: center; }
.drop::before { content: ""; }
.mark-grid { display: grid; grid-template-columns: repeat(3, 43px); gap: 6px; margin-top: 6px; margin-bottom: 9px; }
.mark-grid button { height: 42px; border: 1px solid #ccc; display: flex; flex-direction: column; align-items: center; gap: 2px; padding-top: 5px; line-height: 18px; font-size: 12px; }
.encoding { display: flex; align-items: center; gap: 4px; padding-left: 6px; margin-bottom: 3px; }
.encoding svg { width: 15px; height: 15px; }
.pill { display: inline-block; height: 20px; border-radius: 10px; padding: 0 10px; color: #fff; font-weight: 400; white-space: nowrap; }
.green { background: #00b180; }
.blue { background: #4996b2; }
.encoding .pill { width: 111px; }

.sheet { flex: 1; min-width: 0; margin-left: 6px; display: flex; flex-direction: column; gap: 6px; padding-bottom: 6px; }
.shelf { display: flex; align-items: center; height: 28px; border: 1px solid #d0d0d0; background: #fafafa; gap: 2px; }
.shelf-name { width: 125px; height: 26px; display: flex; align-items: center; gap: 7px; padding-left: 6px; border-right: 1px solid #d0d0d0; }
.shelf .pill { width: 148px; }
.view { flex: 1; min-height: 0; margin-right: 165px; padding: 5px 5px 5px 6px; background: #fff; border: 1px solid #aaa; display: flex; flex-direction: column; }
.view h1 { font: 300 21px/39px "Noto Sans", "Open Sans", sans-serif; padding-left: 3px; white-space: nowrap; color: #444; }
.map { flex: 1; min-height: 0; position: relative; background: #75cff0; overflow: hidden; }
.geo { position: absolute; width: 100%; height: 100%; font-family: "Noto Sans", "Open Sans", sans-serif; text-anchor: middle; }
.city, .isle { fill: #333; stroke: #e8f5fa; stroke-width: 2; paint-order: stroke; font-weight: 500; }
.city { font-size: 12px; }
.isle { font-size: 10px; }
.land { stroke: #666; stroke-width: 3; stroke-linejoin: round; }
.tint { fill-opacity: .75; }
.islets { fill: none; }
.haiti { stroke: #000; stroke-width: 6; }
.lake { fill: #d3cd7c; stroke: none; }
.faded { fill: #a78a4b; opacity: .6; font-weight: 500; }
.wide { letter-spacing: 1px; }
.sea { font-size: 16px; font-style: italic; fill: #b4e3f5; text-anchor: start; letter-spacing: 3px; }
.map-search, .map-tools { position: absolute; left: 9px; width: 28px; background: rgba(245, 245, 245, .85); border: 1px solid #b5c5cc; display: grid; place-items: center; color: #444; }
.map-search { top: 9px; height: 28px; }
.map-tools { top: 46px; height: 110px; grid-template-rows: 26px 24px 24px 1fr; }
.map-tools button { width: 24px; height: 24px; display: grid; place-items: center; }
.map-tools button:last-child { padding-top: 6px; }
.map-tools .pinned { background: #e0e0e0; border: 1px solid #999; width: 22px; height: 22px; }
.credit { position: absolute; left: 2px; bottom: 2px; background: rgba(255, 255, 255, .9); padding: 0 3px; font: 11px/15px "Liberation Sans", sans-serif; color: #444; }
.unknown { position: absolute; right: 5px; bottom: 6px; height: 19px; padding: 0 8px; background: rgba(150, 150, 150, .75); color: #fff; font: 700 13px/19px "Noto Sans", sans-serif; border-radius: 2px; }
.tip { position: absolute; left: 483px; top: 205px; background: #fff; padding: 7px; border: 1px solid #ccc; box-shadow: 1px 2px 3px rgba(0, 0, 0, .4); display: grid; grid-template-columns: max-content auto; column-gap: 3px; width: 228px; height: 52px; white-space: nowrap; font: 13px/18px "Noto Sans", sans-serif; color: #888; }
.tip dd { color: #222; }

.showme { position: absolute; top: 3px; right: 3px; width: 204px; filter: drop-shadow(1px 1px 2px rgba(0, 0, 0, .35)); }
.showme-tab { width: 111px; height: 36px; margin-left: auto; display: flex; align-items: center; gap: 5px; padding: 0 0 5px 11px; background: #fafafa; border: 1px solid #ddd; border-width: 1px 0 0 1px; font-size: 14px; font-weight: 300; }
.showme-body { padding: 15px 13px 15px 14px; background: #fafafa; }
.thumbs { display: grid; grid-template-columns: repeat(3, 56px); gap: 4px; margin-bottom: 16px; }
.thumbs button { height: 42px; border: 1px solid #ddd; background: #fff; }
.thumbs svg { display: block; width: 54px; height: 40px; }
.thumbs .picked { border: 2px solid #d66a33; }
.thumbs .picked svg { width: 52px; height: 38px; }
.num { font-size: 14px; fill: #555; }
.red { color: #dd6158; fill: #fa9a97; }
.grey { color: #d8d8d8; fill: #d8d8d8; }
.lines { fill: none; stroke-width: 3; }
.o { stroke: #fde0c2; }
.b { stroke: #c5d3e5; }
.hint, .need, .note { padding-left: 2px; }
.hint b { color: #111; font-weight: 500; }
.need { display: flex; align-items: center; gap: 3px; margin-top: 5px; height: 23px; white-space: nowrap; }
.hint + .need { margin-top: 3px; }
.need svg { margin: 0 2px 0 3px; color: #444; }
.note { color: #666; line-height: 16px; margin-top: 11px; }

.sheets { display: flex; height: 31px; background: #e6e6e6; border-top: 1px solid #c8c8c8; border-bottom: 1px solid #c8c8c8; }
.sheets button { display: flex; align-items: center; justify-content: center; gap: 4px; min-width: 57px; padding: 0 6px; border-right: 1px solid #c8c8c8; }
.sheets .source-tab { width: 131px; padding-left: 9px; justify-content: flex-start; }
.sheets .on { background: #fafafa; font-weight: 700; color: #444; }
.sheets .add { width: 32px; min-width: 0; padding: 0 8px; }
.add svg { width: 16px; height: 16px; fill: none; stroke: #555; stroke-width: 3; }
.status { display: flex; height: 18px; padding-left: 3px; gap: 19px; background: #ebebeb; font-size: 11px; font-weight: 400; line-height: 20px; white-space: nowrap; }
.slots { margin-left: auto; display: flex; }
.slots i { border-left: 1px solid #ccc; }
.s1 { width: 127px; }
.s2 { width: 27px; }
.s3 { width: 47px; }
.nav, .modes { display: flex; align-items: center; border-left: 1px solid #ccc; }
.nav { width: 71px; gap: 8px; padding-left: 7px; }
.nav svg { display: block; width: 8px; height: 8px; fill: #aaa; }
.modes { width: 67px; gap: 10px; padding-left: 8px; }
.modes svg { display: block; width: 11px; height: 11px; fill: #b5b5b5; }
.modes .full svg { fill: #666; }
```
